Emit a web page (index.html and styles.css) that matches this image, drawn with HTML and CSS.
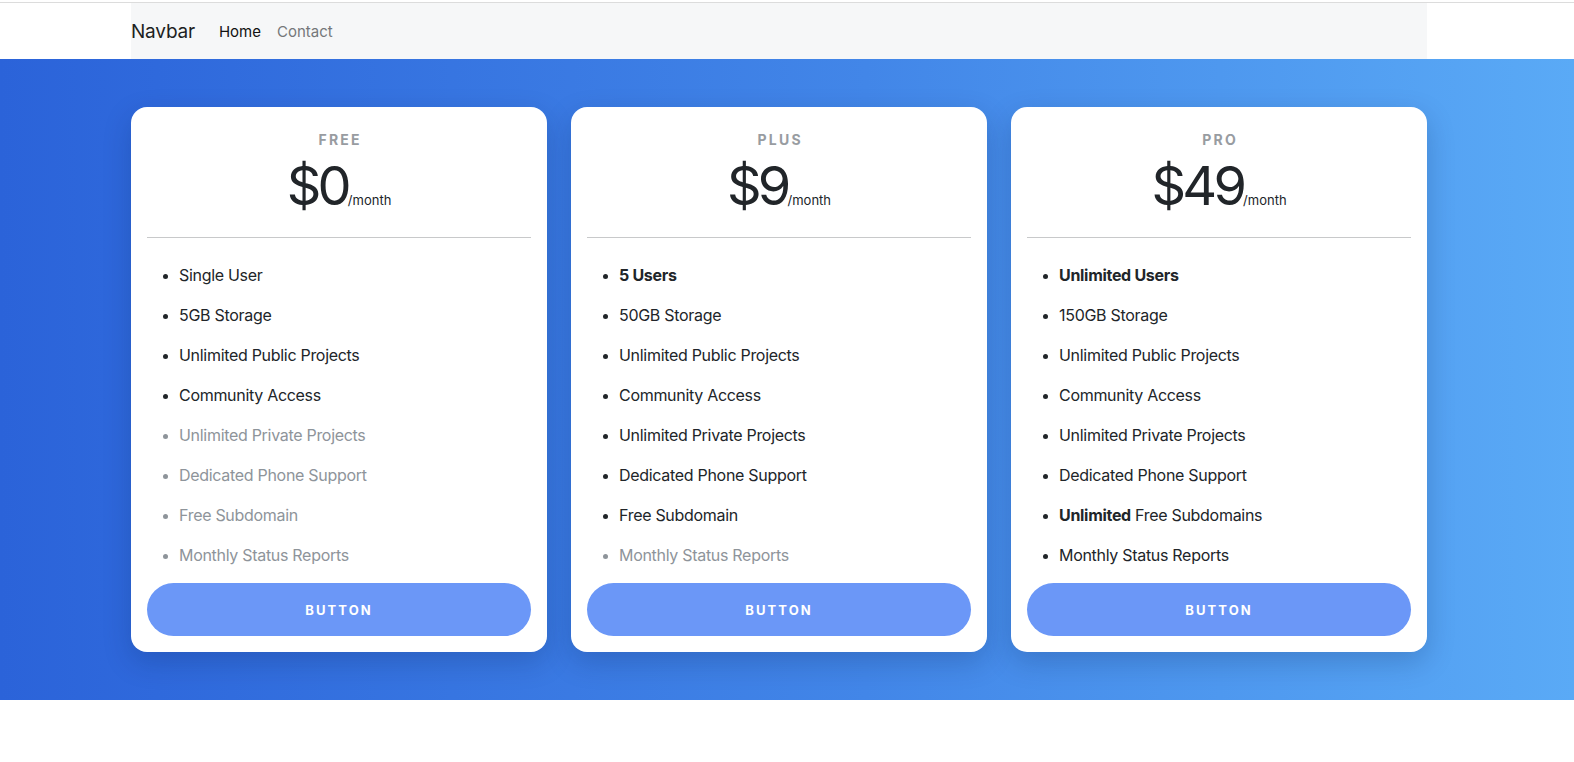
FILE: index.html
```html
<!DOCTYPE html>
<html lang="en">
<head>
<meta charset="utf-8">
<title>Pricing</title>
<link rel="stylesheet" href="styles.css">
</head>
<body>
<nav class="navbar">
  <div class="navbar-inner">
    <div class="container nav-container">
      <a class="brand" href="#">Navbar</a>
      <a class="nav-link active" href="#">Home</a>
      <a class="nav-link" href="#">Contact</a>
    </div>
  </div>
</nav>
<section class="pricing">
  <div class="pricing-inner">
    <div class="container cards">
      <div class="card">
        <div class="card-head">
          <div class="plan">FREE</div>
          <div class="price">$0<span class="per">/month</span></div>
        </div>
        <hr class="divider">
        <ul class="features">
          <li>Single User</li>
          <li>5GB Storage</li>
          <li>Unlimited Public Projects</li>
          <li>Community Access</li>
          <li class="muted">Unlimited Private Projects</li>
          <li class="muted">Dedicated Phone Support</li>
          <li class="muted">Free Subdomain</li>
          <li class="muted">Monthly Status Reports</li>
        </ul>
        <button class="btn">BUTTON</button>
      </div>
      <div class="card">
        <div class="card-head">
          <div class="plan">PLUS</div>
          <div class="price">$9<span class="per">/month</span></div>
        </div>
        <hr class="divider">
        <ul class="features">
          <li><strong>5 Users</strong></li>
          <li>50GB Storage</li>
          <li>Unlimited Public Projects</li>
          <li>Community Access</li>
          <li>Unlimited Private Projects</li>
          <li>Dedicated Phone Support</li>
          <li>Free Subdomain</li>
          <li class="muted">Monthly Status Reports</li>
        </ul>
        <button class="btn">BUTTON</button>
      </div>
      <div class="card">
        <div class="card-head">
          <div class="plan">PRO</div>
          <div class="price">$49<span class="per">/month</span></div>
        </div>
        <hr class="divider">
        <ul class="features">
          <li><strong>Unlimited Users</strong></li>
          <li>150GB Storage</li>
          <li>Unlimited Public Projects</li>
          <li>Community Access</li>
          <li>Unlimited Private Projects</li>
          <li>Dedicated Phone Support</li>
          <li><strong>Unlimited</strong> Free Subdomains</li>
          <li>Monthly Status Reports</li>
        </ul>
        <button class="btn">BUTTON</button>
      </div>
    </div>
  </div>
</section>
</body>
</html>
```
FILE: styles.css
```css
* { box-sizing: border-box; }
html, body {
  margin: 0;
  padding: 0;
  background: #ffffff;
  color: #212529;
  font-family: Inter, "Noto Sans", "Liberation Sans", sans-serif;
}
.container {
  width: 1296px;
  margin: 0 auto;
}
.navbar {
  margin-top: 2px;
  border-top: 1px solid #dcdcdc;
  background: #ffffff;
}
.navbar-inner {
  padding-right: 16px;
}
.nav-container {
  height: 56px;
  display: flex;
  align-items: center;
  background: #f6f7f8;
}
.brand {
  font-size: 19px;
  letter-spacing: -0.2px;
  color: #1d1f22;
  text-decoration: none;
  margin-right: 16px;
}
.nav-link {
  font-size: 15px;
  color: #75777a;
  text-decoration: none;
  padding: 0 8px;
}
.nav-link.active {
  color: #111111;
}
.pricing {
  background: linear-gradient(90deg, #2b63d9 0%, #2f69dc 10%, #4286e8 55%, #5aaaf6 100%);
  padding: 48px 0;
}
.pricing-inner {
  padding-right: 16px;
}
.cards {
  display: grid;
  grid-template-columns: repeat(3, 1fr);
  gap: 24px;
}
.card {
  background: #ffffff;
  border-radius: 16px;
  padding: 16px;
  display: flex;
  flex-direction: column;
  box-shadow: 0 10px 28px rgba(10, 30, 80, 0.22);
}
.card-head {
  text-align: center;
  padding-top: 8px;
  padding-bottom: 8px;
}
.plan {
  font-size: 14px;
  line-height: 18px;
  font-weight: 700;
  letter-spacing: 0.16em;
  color: #989ca1;
  padding-left: 0.16em;
}
.price {
  margin-top: 10px;
  font-size: 54px;
  line-height: 54px;
  font-weight: 400;
  color: #212529;
  letter-spacing: -0.07em;
}
.per {
  font-size: 13px;
  line-height: 1;
  letter-spacing: 0;
}
.divider {
  border: 0;
  border-top: 1px solid #c8c9ca;
  margin: 16px 0 17px;
}
.features {
  list-style: disc;
  margin: 0 0 8px;
  padding-left: 32px;
}
.features li {
  font-size: 16px;
  letter-spacing: -0.3px;
  line-height: 24px;
  padding: 8px 0;
  color: #212529;
}
.features li::marker {
  font-size: 14px;
}
.features li.muted {
  color: #8e949a;
}
.features strong {
  font-weight: 700;
}
.btn {
  height: 53px;
  border: 0;
  border-radius: 27px;
  background: #6b97f7;
  color: #ffffff;
  font-family: inherit;
  font-size: 13px;
  font-weight: 700;
  letter-spacing: 0.16em;
  cursor: pointer;
}
```
